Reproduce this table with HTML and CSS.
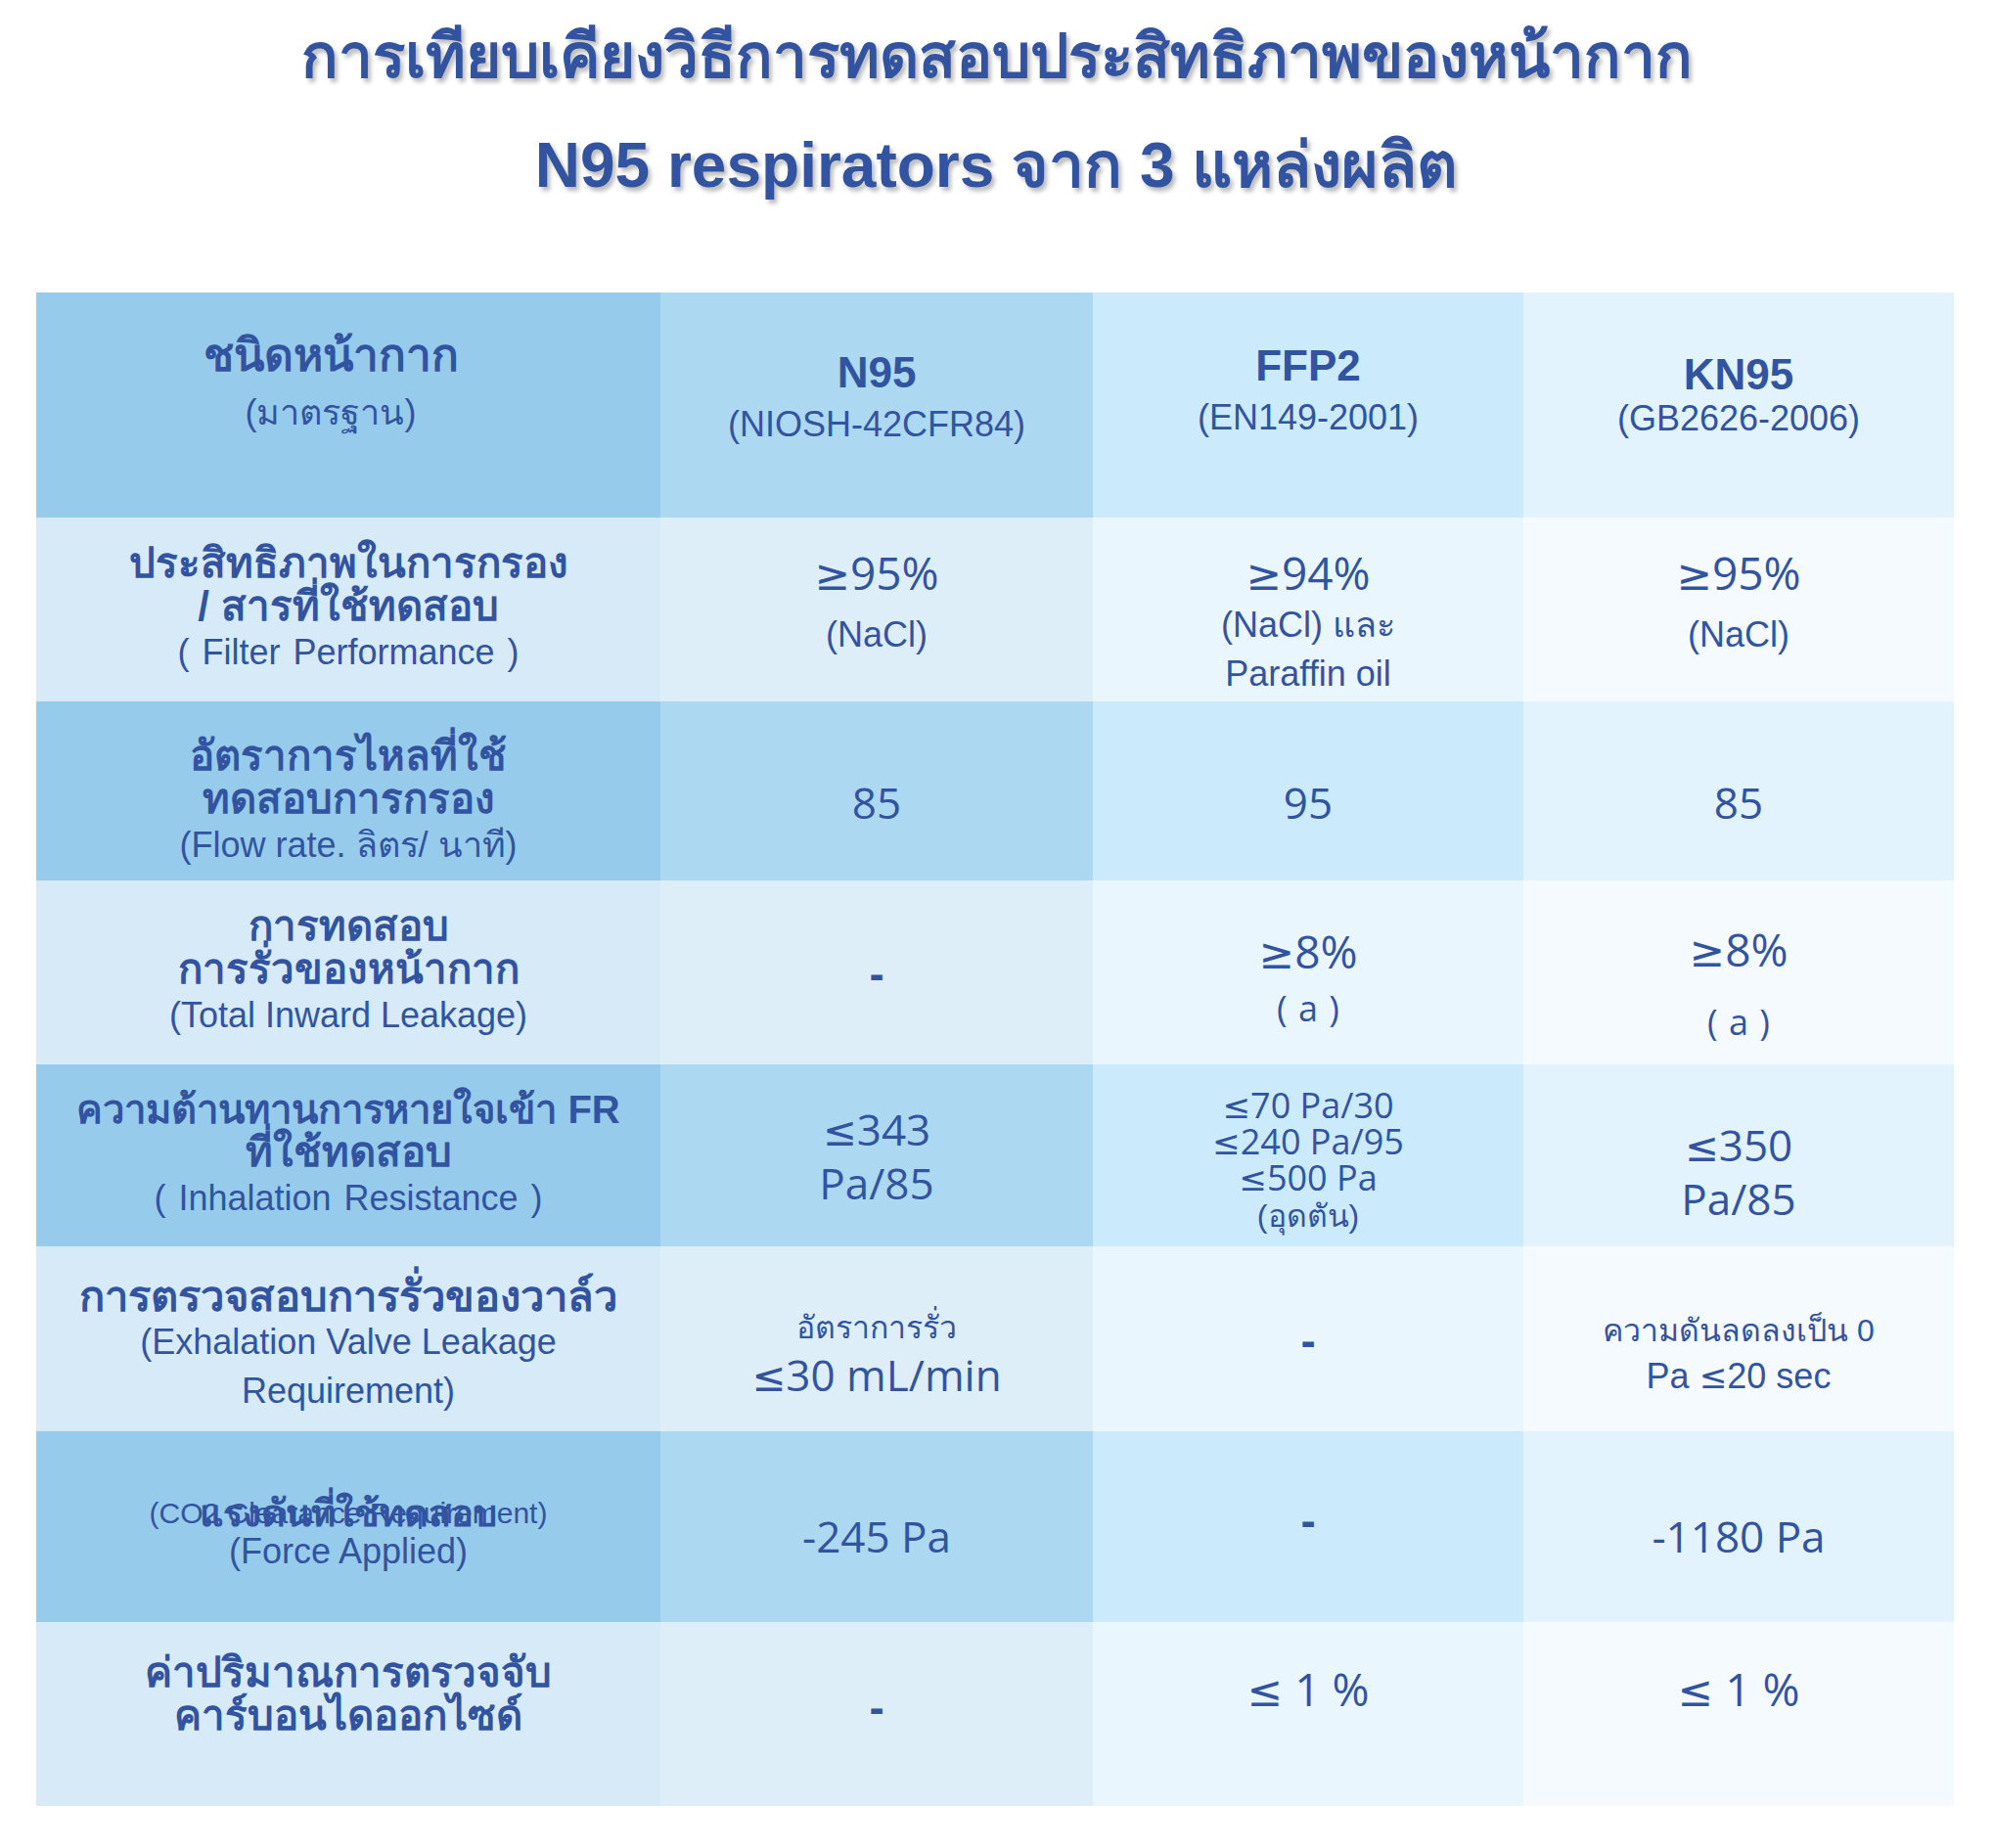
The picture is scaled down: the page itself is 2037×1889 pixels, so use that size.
FILE: index.html
```html
<!DOCTYPE html>
<html lang="th">
<head>
<meta charset="utf-8">
<title>N95 comparison</title>
<link rel="stylesheet" href="styles.css">
</head>
<body>
<header class="title">
  <div class="t1">การเทียบเคียงวิธีการทดสอบประสิทธิภาพของหน้ากาก</div>
  <div class="t2">N95 respirators จาก 3 แหล่งผลิต</div>
</header>
<main class="grid">
  <div class="cell h k1 h-type"><div class="hd">ชนิดหน้ากาก</div><div class="sub">(มาตรฐาน)</div></div>
  <div class="cell h k2 h-n95"><div class="en">N95</div><div class="sub">(NIOSH-42CFR84)</div></div>
  <div class="cell h k3 h-ffp"><div class="en">FFP2</div><div class="sub">(EN149-2001)</div></div>
  <div class="cell h k4 h-kn"><div class="en">KN95</div><div class="sub">(GB2626-2006)</div></div>

  <div class="cell l k1"><div class="hd">ประสิทธิภาพในการกรอง</div><div class="hd">/ สารที่ใช้ทดสอบ</div><div class="sub ws">( Filter Performance )</div></div>
  <div class="cell l k2 top"><div class="val big"><span class="sym">≥</span>95%</div><div class="sub sp">(NaCl)</div></div>
  <div class="cell l k3 top"><div class="val big"><span class="sym">≥</span>94%</div><div class="sub">(NaCl) และ</div><div class="sub">Paraffin oil</div></div>
  <div class="cell l k4 top"><div class="val big"><span class="sym">≥</span>95%</div><div class="sub sp">(NaCl)</div></div>

  <div class="cell d k1 lo"><div class="hd">อัตราการไหลที่ใช้</div><div class="hd">ทดสอบการกรอง</div><div class="sub">(Flow rate. ลิตร/ นาที)</div></div>
  <div class="cell d k2 lo"><div class="val">85</div></div>
  <div class="cell d k3 lo"><div class="val">95</div></div>
  <div class="cell d k4 lo"><div class="val">85</div></div>

  <div class="cell l k1"><div class="hd">การทดสอบ</div><div class="hd">การรั่วของหน้ากาก</div><div class="sub">(Total Inward Leakage)</div></div>
  <div class="cell l k2"><div class="dash">-</div></div>
  <div class="cell l k3 lo-s"><div class="val big"><span class="sym">≥</span>8%</div><div class="paren">( a )</div></div>
  <div class="cell l k4 lo-n"><div class="val big"><span class="sym">≥</span>8%</div><div class="paren far">( a )</div></div>

  <div class="cell d k1"><div class="hd nar">ความต้านทานการหายใจเข้า FR</div><div class="hd">ที่ใช้ทดสอบ</div><div class="sub ws">( Inhalation Resistance )</div></div>
  <div class="cell d k2"><div class="val"><span class="sym">≤</span>343</div><div class="val">Pa/85</div></div>
  <div class="cell d k3 lo-s"><div class="val sm"><span class="sym">≤</span>70 Pa/30</div><div class="val sm"><span class="sym">≤</span>240 Pa/95</div><div class="val sm"><span class="sym">≤</span>500 Pa</div><div class="thn thn-s">(อุดตัน)</div></div>
  <div class="cell d k4 lo-l"><div class="val"><span class="sym">≤</span>350</div><div class="val">Pa/85</div></div>

  <div class="cell l k1 lo-s"><div class="hd wid">การตรวจสอบการรั่วของวาล์ว</div><div class="sub">(Exhalation Valve Leakage</div><div class="sub">Requirement)</div></div>
  <div class="cell l k2 lo-l"><div class="thn">อัตราการรั่ว</div><div class="val"><span class="sym">≤</span>30 mL/min</div></div>
  <div class="cell l k3"><div class="dash">-</div></div>
  <div class="cell l k4 lo-l"><div class="thn">ความดันลดลงเป็น 0</div><div class="sub">Pa <span class="sym">≤</span>20 sec</div></div>

  <div class="cell d k1 lo-s"><div class="overlap"><span class="co2">(CO2 Clearance Requirement)</span><span class="hd force">แรงดันที่ใช้ทดสอบ</span></div><div class="sub tight">(Force Applied)</div></div>
  <div class="cell d k2 lo-m"><div class="val">-245 Pa</div></div>
  <div class="cell d k3 hi-s"><div class="dash">-</div></div>
  <div class="cell d k4 lo-m"><div class="val">-1180 Pa</div></div>

  <div class="cell l k1 up"><div class="hd">ค่าปริมาณการตรวจจับ</div><div class="hd">คาร์บอนไดออกไซด์</div></div>
  <div class="cell l k2 hi-s"><div class="dash">-</div></div>
  <div class="cell l k3 up-l"><div class="val mid"><span class="sym">≤</span> 1 %</div></div>
  <div class="cell l k4 up-l"><div class="val mid"><span class="sym">≤</span> 1 %</div></div>
</main>
</body>
</html>
```

FILE: styles.css
```css
html, body {
  margin: 0;
  padding: 0;
  background: #ffffff;
}
body {
  width: 2037px;
  color: #3254a0;
  font-family: "Liberation Sans", Arial, sans-serif;
}
.title {
  text-align: center;
  padding-top: 14px;
  height: 285px;
  box-sizing: border-box;
  font-weight: bold;
  font-size: 64px;
  text-shadow: 3px 4px 4px rgba(60, 60, 60, 0.35);
}
.t1 { line-height: 88px; font-size: 62px; }
.t2 { line-height: 134px; }
.grid {
  margin-left: 37px;
  margin-top: 14px;
  width: 1960px;
  display: grid;
  grid-template-columns: 638px 442px 440px 440px;
  grid-template-rows: 230px 188px 183px 188px 186px 189px 195px 188px;
}
.cell {
  display: flex;
  flex-direction: column;
  align-items: center;
  justify-content: center;
  text-align: center;
  box-sizing: border-box;
}
.cell.h { justify-content: flex-start; padding-top: 34px; }
.cell.h-type { padding-top: 36px; padding-right: 36px; }
.h-type .sub { margin-top: 6px; }
.cell.h-n95 { padding-top: 54px; }
.cell.h-ffp { padding-top: 47px; }
.cell.h-kn { padding-top: 56px; }
.h-kn .sub { margin-top: -8px; }
.cell.top { justify-content: flex-start; padding-top: 30px; }
.cell.lo { padding-top: 22px; }
.cell.lo-s { padding-top: 12px; }
.cell.lo-m { padding-top: 18px; }
.cell.lo-n { padding-top: 24px; }
.cell.lo-l { padding-top: 32px; }
.cell.hi-s { padding-bottom: 16px; }
.cell.up { padding-bottom: 40px; }
.cell.up-l { padding-bottom: 50px; }

.h.k1, .d.k1 { background: #97cbeb; }
.h.k2, .d.k2 { background: #acd8f2; }
.h.k3, .d.k3 { background: #cbebfd; }
.h.k4, .d.k4 { background: #e2f3fd; }
.l.k1 { background: #d7eaf8; }
.l.k2 { background: #deeef9; }
.l.k3 { background: #eaf6fe; }
.l.k4 { background: #f4fafe; }

.hd {
  font-weight: bold;
  font-size: 42px;
  line-height: 44px;
}
.hd.nar { font-size: 40px; }
.hd.wid { font-size: 43.5px; }
.h .hd { font-size: 46px; line-height: 56px; }
.en {
  font-weight: bold;
  font-size: 44px;
  line-height: 56px;
}
.sub {
  font-size: 36px;
  line-height: 50px;
}
.sub.ws { word-spacing: 3px; }
.sub.sp { margin-top: 10px; }
.sub.tight { line-height: 40px; }
.val {
  font-family: "Open Sans", "DejaVu Sans", sans-serif;
  font-size: 44px;
  line-height: 52px;
}
.val.big { font-size: 46px; }
.val.mid { font-size: 46px; }
.val.sm { font-size: 36px; line-height: 35px; }
.sym {
  font-family: "DejaVu Sans", sans-serif;
  font-size: 0.95em;
}
.paren {
  font-family: "Open Sans", sans-serif;
  font-size: 36px;
  line-height: 48px;
  margin-top: 6px;
  word-spacing: 2px;
}
.paren.far { margin-top: 22px; }
.thn {
  font-size: 32px;
  line-height: 44px;
}
.thn-s { line-height: 40px; }
.dash {
  font-family: "Open Sans", sans-serif;
  font-weight: bold;
  font-size: 44px;
  line-height: 50px;
}
.overlap {
  display: grid;
  place-items: center;
}
.overlap > span { grid-area: 1 / 1; }
.co2 { font-size: 30px; line-height: 38px; }
.force { font-size: 38px; line-height: 38px; }
```
